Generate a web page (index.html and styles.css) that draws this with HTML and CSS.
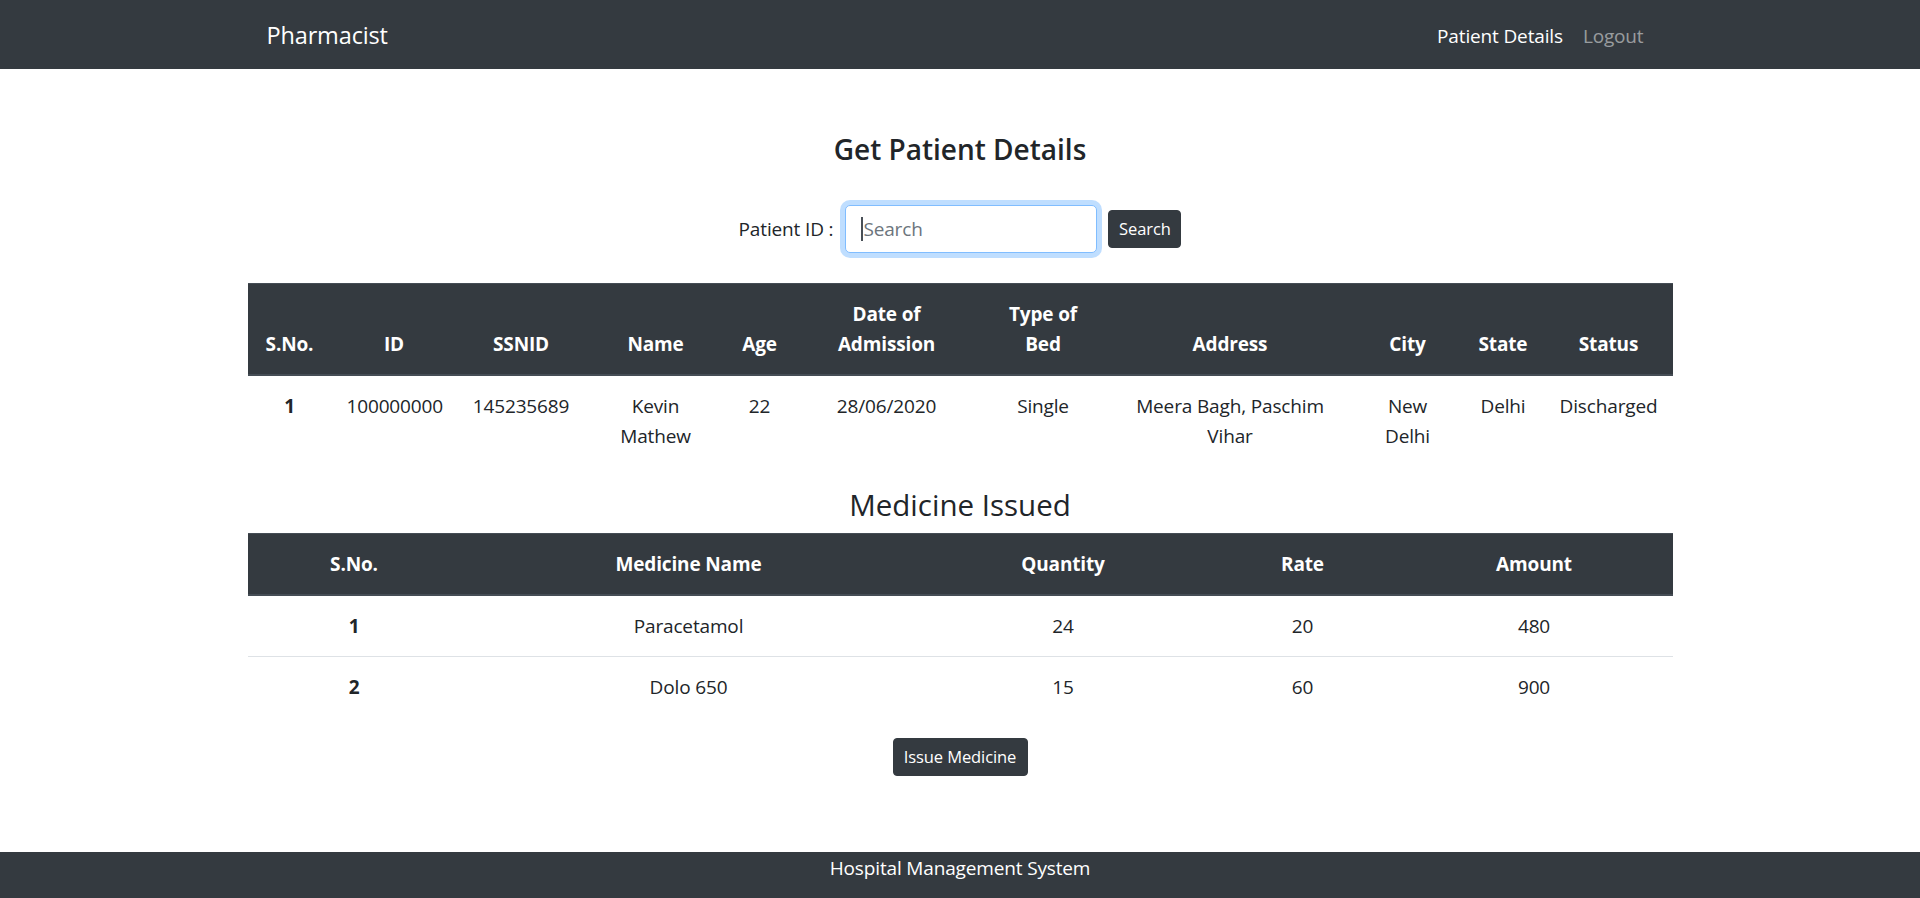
FILE: index.html
```html
<!DOCTYPE html>
<html lang="en">
<head>
<meta charset="utf-8">
<title>Pharmacist - Patient Details</title>
<link rel="stylesheet" href="styles.css">
</head>
<body>
<div class="page">
  <nav class="navbar">
    <div class="container nav-inner">
      <a class="brand" href="#">Pharmacist</a>
      <ul class="nav-links">
        <li><a class="nav-link active" href="#">Patient Details</a></li>
        <li><a class="nav-link" href="#">Logout</a></li>
      </ul>
    </div>
  </nav>

  <main class="container main">
    <h3 class="page-title">Get Patient Details</h3>
    <form class="search-form">
      <label class="search-label" for="pid">Patient ID :</label>
      <div class="input-wrap">
        <span class="caret"></span>
        <input class="search-input" id="pid" type="text" placeholder="Search">
      </div>
      <button class="btn btn-search" type="button">Search</button>
    </form>

    <table class="table patient-table">
      <colgroup>
        <col class="pc1"><col class="pc2"><col class="pc3"><col class="pc4"><col class="pc5"><col class="pc6"><col class="pc7"><col class="pc8"><col class="pc9"><col class="pc10"><col class="pc11">
      </colgroup>
      <thead>
        <tr>
          <th>S.No.</th><th>ID</th><th>SSNID</th><th>Name</th><th>Age</th><th>Date of Admission</th><th>Type of Bed</th><th>Address</th><th>City</th><th>State</th><th>Status</th>
        </tr>
      </thead>
      <tbody>
        <tr>
          <th class="row-head">1</th><td>100000000</td><td>145235689</td><td>Kevin Mathew</td><td>22</td><td>28/06/2020</td><td>Single</td><td>Meera Bagh, Paschim Vihar</td><td>New Delhi</td><td>Delhi</td><td>Discharged</td>
        </tr>
      </tbody>
    </table>

    <h2 class="section-title">Medicine Issued</h2>
    <table class="table medicine-table">
      <colgroup>
        <col class="mc1"><col class="mc2"><col class="mc3"><col class="mc4"><col class="mc5">
      </colgroup>
      <thead>
        <tr><th>S.No.</th><th>Medicine Name</th><th>Quantity</th><th>Rate</th><th>Amount</th></tr>
      </thead>
      <tbody>
        <tr><th class="row-head">1</th><td>Paracetamol</td><td>24</td><td>20</td><td>480</td></tr>
        <tr><th class="row-head">2</th><td>Dolo 650</td><td>15</td><td>60</td><td>900</td></tr>
      </tbody>
    </table>

    <div class="issue-row">
      <button class="btn btn-issue" type="button">Issue Medicine</button>
    </div>
  </main>

  <footer class="footer">Hospital Management System</footer>
</div>
</body>
</html>
```

FILE: styles.css
```css
* { box-sizing: border-box; }

html, body {
  margin: 0;
  padding: 0;
}

body {
  font-family: "Open Sans", "Noto Sans", sans-serif;
  font-size: 19px;
  letter-spacing: -0.15px;
  line-height: 30px;
  color: #212529;
  background: #fff;
}

.page {
  min-height: 898px;
  display: flex;
  flex-direction: column;
}

.container {
  width: 1425px;
  margin: 0 auto;
}

/* Navbar */
.navbar {
  background: #343a40;
  height: 69px;
  display: flex;
  align-items: center;
}

.nav-inner {
  display: flex;
  align-items: center;
  justify-content: space-between;
  padding: 2px 19px 0;
}

.brand {
  color: #fff;
  text-decoration: none;
  font-size: 23.5px;
  line-height: 37px;
}

.nav-links {
  list-style: none;
  margin: 0;
  padding: 0;
  display: flex;
}

.nav-link {
  display: block;
  padding: 0 10px;
  color: rgba(255, 255, 255, 0.5);
  text-decoration: none;
}

.nav-link.active { color: #fff; }

/* Main */
.main {
  padding-top: 64px;
}

.page-title {
  margin: 0 0 40px;
  text-align: center;
  font-size: 28px;
  letter-spacing: 0;
  line-height: 32px;
  font-weight: 600;
}

.search-form {
  display: flex;
  justify-content: center;
  align-items: center;
  margin: 0 0 30px;
}

.search-label {
  margin-right: 12px;
}

.input-wrap {
  position: relative;
  display: flex;
}

.caret {
  position: absolute;
  left: 16px;
  top: 12px;
  width: 2px;
  height: 24px;
  background: #495057;
}

.search-input {
  width: 252px;
  height: 47.5px;
  padding: 7px 15px 7px 17px;
  font: inherit;
  letter-spacing: inherit;
  color: #495057;
  background: #fff;
  border: 1px solid #80bdff;
  border-radius: 5px;
  outline: none;
  box-shadow: 0 0 0 5px rgba(0, 123, 255, 0.25);
}

.search-input::placeholder { color: #6c757d; }

.btn {
  font-family: inherit;
  font-size: 16.5px;
  letter-spacing: -0.1px;
  line-height: 26px;
  color: #fff;
  background: #343a40;
  border: 1px solid #343a40;
  border-radius: 4px;
  padding: 5px 10px;
  cursor: pointer;
}

.btn-search {
  margin-left: 11px;
  height: 38px;
  width: 73px;
  padding: 5px 0;
}

/* Tables */
.table {
  width: 100%;
  border-collapse: collapse;
  table-layout: fixed;
  margin-bottom: 20px;
}

.table th,
.table td {
  padding: 15px;
  text-align: center;
  vertical-align: top;
  border-top: 1px solid #dee2e6;
}

.table thead th {
  vertical-align: bottom;
  color: #fff;
  background: #343a40;
  border-top: 1px solid #454d55;
  border-bottom: 2px solid #454d55;
  font-weight: 700;
}

.table tbody th.row-head { font-weight: 700; }

.pc1 { width: 84px; }
.pc2 { width: 125px; }
.pc3 { width: 129px; }
.pc4 { width: 140px; }
.pc5 { width: 68px; }
.pc6 { width: 186px; }
.pc7 { width: 127px; }
.pc8 { width: 247px; }
.pc9 { width: 108px; }
.pc10 { width: 83px; }
.pc11 { width: 128px; }

.mc1 { width: 213px; }
.mc2 { width: 456px; }
.mc3 { width: 293px; }
.mc4 { width: 186px; }
.mc5 { width: 277px; }

.section-title {
  margin: 0 0 10px;
  text-align: center;
  font-size: 29.5px;
  letter-spacing: 0;
  line-height: 37px;
  font-weight: 400;
}

.issue-row {
  display: flex;
  justify-content: center;
  padding-top: 1px;
}

.btn-issue {
  height: 38px;
  width: 135px;
  padding: 5px 0;
}

/* Footer */
.footer {
  margin-top: auto;
  height: 46px;
  padding-top: 1px;
  background: #343a40;
  color: #fff;
  text-align: center;
  line-height: 30px;
}
```
